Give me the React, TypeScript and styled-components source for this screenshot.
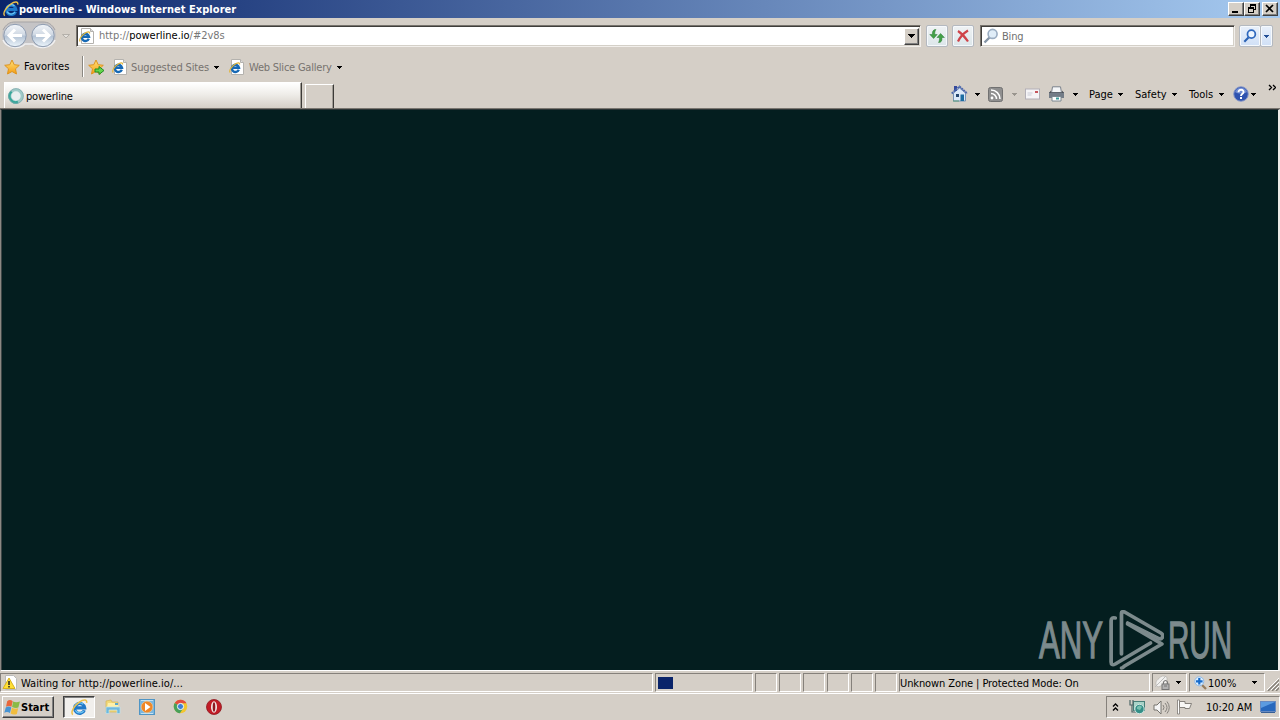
import React from 'react';
import styled, { createGlobalStyle } from 'styled-components';

const Global = createGlobalStyle`
  * { box-sizing: border-box; }
  body { margin: 0; overflow: hidden; }
`;

const face = '#d5cfc7';

const Desktop = styled.div`
  width: 1280px;
  height: 720px;
  display: flex;
  flex-direction: column;
  background: ${face};
  font-family: 'DejaVu Sans Condensed', 'DejaVu Sans', sans-serif;
  font-stretch: condensed;
  font-size: 11px;
  line-height: 14px;
  color: #000;
  overflow: hidden;
`;

const Text = styled.span<{ $left?: number; $space?: number; $color?: string; $bold?: boolean; $width?: number; $top?: number }>`
  flex: none;
  white-space: pre;
  width: ${p => (p.$width ? `${p.$width}px` : 'auto')};
  margin-left: ${p => p.$left ?? 0}px;
  margin-top: ${p => p.$top ?? 0}px;
  letter-spacing: ${p => p.$space ?? 0}px;
  color: ${p => p.$color ?? 'inherit'};
  font-weight: ${p => (p.$bold ? 700 : 400)};
`;

const Slot = styled.span<{ $left?: number; $top?: number }>`
  flex: none;
  display: flex;
  margin-left: ${p => p.$left ?? 0}px;
  margin-top: ${p => p.$top ?? 0}px;
`;

const TitleBar = styled.header`
  height: 18px;
  flex: none;
  display: flex;
  align-items: center;
  padding: 0 2px 0 3px;
  color: #fff;
  background: linear-gradient(90deg, #0a246a, #a6caf0);
`;

const Spacer = styled.div`
  flex: 1;
`;

const CaptionButton = styled.span<{ $left?: number }>`
  width: 16px;
  height: 14px;
  margin-left: ${p => p.$left ?? 0}px;
  background: ${face};
  border: 1px solid;
  border-color: #fff #404040 #404040 #fff;
  box-shadow: inset -1px -1px #808080;
  display: flex;
`;

const NavRow = styled.div`
  height: 34px;
  flex: none;
  display: flex;
  align-items: flex-start;
  padding: 2px 0 0 1px;
`;

const Field = styled.div<{ $width: number; $left: number }>`
  width: ${p => p.$width}px;
  height: 22px;
  flex: none;
  margin: 5px 0 0 ${p => p.$left}px;
  display: flex;
  align-items: center;
  background: #fff;
  border: 1px solid;
  border-color: #77736d #f2efeb #f2efeb #77736d;
  box-shadow: inset 1px 1px #403e3b, inset -1px -1px #d4d0c8;
`;

const DropButton = styled.span`
  width: 15px;
  height: 17px;
  display: flex;
  align-items: center;
  justify-content: center;
  background: ${face};
  border: 1px solid;
  border-color: #fff #404040 #404040 #fff;
  box-shadow: inset -1px -1px #808080;
`;

const GlassButton = styled.span<{ $left: number; $width: number; $blue?: boolean }>`
  width: ${p => p.$width}px;
  height: 22px;
  flex: none;
  margin: 5px 0 0 ${p => p.$left}px;
  display: flex;
  align-items: center;
  justify-content: center;
  border: 1px solid #b4b9c0;
  border-radius: 2px;
  box-shadow: inset 0 0 0 1px #f6f9fc;
  background: ${p => (p.$blue ? 'linear-gradient(#e9f0fa, #d0e0f6)' : 'linear-gradient(#eff2f4, #dce6ea)')};
`;

const FavoritesRow = styled.div`
  height: 30px;
  flex: none;
  display: flex;
  align-items: center;
  padding-left: 4px;
`;

const Divider = styled.span`
  width: 2px;
  height: 21px;
  margin: 0 0 2px 12px;
  border-left: 1px solid #8a8781;
  border-right: 1px solid #fff;
`;

const TabRow = styled.div`
  height: 27px;
  flex: none;
  display: flex;
  align-items: flex-start;
  border-bottom: 1px solid #79756f;
`;

const Tab = styled.div`
  width: 298px;
  height: 26px;
  margin-left: 4px;
  padding-left: 3px;
  display: flex;
  align-items: center;
  background: linear-gradient(#fff, #efede9 45%, ${face});
  border-top: 1px solid #fff;
  border-left: 1px solid #fff;
  border-right: 1px solid #3c3a37;
  box-shadow: inset -1px 0 #a09c95;
`;

const NewTab = styled.div`
  width: 29px;
  height: 24px;
  margin: 2px 0 0 3px;
  border-top: 1px solid #fff;
  border-left: 1px solid #fff;
  border-right: 1px solid #3c3a37;
  box-shadow: inset -1px 0 #a09c95;
`;

const Page = styled.main`
  height: 562px;
  flex: none;
  display: flex;
  justify-content: flex-end;
  align-items: flex-end;
  padding-right: 45px;
  background: #041e1f;
  border: solid;
  border-width: 1px 2px 1px 1px;
  border-color: #2b3435 #eeebe7 #fff #8c8983;
  box-shadow: inset 1px 0 #3e4646;
`;

const Watermark = styled.div`
  display: flex;
  align-items: flex-end;
  color: #7c8a8c;
  height: 60px;
  width: 194px;
`;

const Word = styled.span<{ $width: number; $scale: number; $left?: number }>`
  display: block;
  flex: none;
  width: ${p => p.$width}px;
  height: 50px;
  margin-left: ${p => p.$left ?? 0}px;
  margin-bottom: 4px;
  font: 400 51px/50px 'Liberation Sans', sans-serif;
  -webkit-text-stroke: 1.3px #7c8a8c;
  white-space: nowrap;
  transform: scaleX(${p => p.$scale});
  transform-origin: 0 0;
`;

const StatusBar = styled.div`
  height: 22px;
  flex: none;
  display: flex;
  padding-top: 2px;
`;

const Pane = styled.div<{ $width: number; $left?: number; $pad?: number }>`
  width: ${p => p.$width}px;
  height: 19px;
  flex: none;
  margin-left: ${p => p.$left ?? 0}px;
  padding-left: ${p => p.$pad ?? 0}px;
  display: flex;
  align-items: center;
  border: 1px solid;
  border-color: #85817b #fff #fff #85817b;
`;

const Progress = styled.span`
  width: 15px;
  height: 12px;
  background: #0a246a;
`;

const TaskBar = styled.footer`
  height: 27px;
  flex: none;
  display: flex;
  align-items: flex-start;
  border-top: 1px solid #fff;
  padding: 2px 0 0 2px;
`;

const StartButton = styled.div`
  width: 52px;
  height: 22px;
  display: flex;
  align-items: center;
  border: 1px solid;
  border-color: #fff #404040 #404040 #fff;
  box-shadow: inset -1px -1px #808080;
`;

const TaskButton = styled.div`
  width: 32px;
  height: 22px;
  margin-left: 9px;
  display: flex;
  align-items: center;
  justify-content: center;
  background: #f1efec;
  border: 1px solid;
  border-color: #404040 #fff #fff #404040;
  box-shadow: inset 1px 1px #808080;
`;

const Tray = styled.div`
  width: 174px;
  height: 22px;
  display: flex;
  align-items: center;
  border: 1px solid;
  border-color: #85817b #fff #fff #85817b;
`;

const Arrow = ({ color = '#000', small = false }: { color?: string; small?: boolean }) => (
  <svg width={small ? 5 : 7} height={small ? 3 : 4} viewBox="0 0 7 4" shapeRendering="crispEdges">
    <path d="M0 0h7L3.5 4z" fill={color} />
  </svg>
);

const IELogo = ({ size = 16 }: { size?: number }) => (
  <svg width={size} height={size} viewBox="0 0 16 16">
    <path d="M12.6 10.6A4.7 4.7 0 1 1 12.9 8.4H5" fill="none" stroke="#1f78c8" strokeWidth="3" />
    <path d="M12 11.2A4.8 4.8 0 0 1 4 10.600M3.800 6.800a4.800 4.800 0 0 1 7.700-1.900" fill="none" stroke="#6cc4f2" strokeWidth="1.300" />
    <path d="M1.700 14.700C-.7 12.400 3 6.400 7.500 3.200S15.400.4 14.700 3.600" fill="none" stroke="#ecc04a" strokeWidth="1.400" />
  </svg>
);

const PageIcon = () => (
  <svg width="16" height="16" viewBox="0 0 16 16">
    <path d="M2.500.5h9l3 3v12h-12z" fill="#fff" stroke="#b4b2ae" />
    <path d="M11.500.5v3h3" fill="#ddd" stroke="#b4b2ae" />
    <path d="M9.800 10.700A3.600 3.600 0 1 1 10 8.700H4" fill="none" stroke="#1769b5" strokeWidth="2.400" />
    <path d="M1 13.500c-1-2 1-5.500 4.500-8s5.600-1.800 5 0" fill="none" stroke="#e2b53a" strokeWidth="1.200" />
  </svg>
);

const NavArrows = () => (
  <svg width="56" height="30" viewBox="0 0 56 30">
    <defs>
      <linearGradient id="orb" x2="0" y2="1">
        <stop stopColor="#f2f5f9" />
        <stop offset=".48" stopColor="#cfd8e3" />
        <stop offset=".52" stopColor="#b3c2d4" />
        <stop offset="1" stopColor="#edf6fc" />
      </linearGradient>
    </defs>
    <path d="M14 2h28a13 13 0 0 1 0 26c-5 0-8-3-14-3s-9 3-14 3a13 13 0 0 1 0-26z" fill="#c5c4c6" />
    <path d="M2 10C5 4 9 2 14 2h28c5 0 9 2 12 8" fill="none" stroke="#a5a3a5" />
    <path d="M2 20c3 8 16 10 22 4h8c6 6 19 4 22-4" fill="none" stroke="#f1f1f2" strokeWidth="1.500" />
    {[14, 42].map(x => (
      <circle key={x} cx={x} cy="15.500" r="11.200" fill="url(#orb)" stroke="#8d9bb0" />
    ))}
    <g fill="none" stroke="#fff" strokeWidth="3">
      <path d="M21 15.500H9M14 9.500l-6 6 6 6" />
      <path d="M35 15.500h12M42 9.500l6 6-6 6" />
    </g>
  </svg>
);

const Star = ({ add = false }: { add?: boolean }) => (
  <svg width="17" height="17" viewBox="0 0 17 17">
    <defs>
      <linearGradient id="gold" x2="0" y2="1">
        <stop stopColor="#ffe27a" />
        <stop offset="1" stopColor="#f59c10" />
      </linearGradient>
    </defs>
    <path d="M8 1l2.200 4.700 5.100.6-3.800 3.500 1 5.200L8 12.500 3.500 15l1-5.200L.7 6.300l5.100-.6z" fill="url(#gold)" stroke="#dd9420" />
    {add && <path d="M7 10h4V7.500l5 4-5 4V13H7z" fill="#64d64b" stroke="#238b24" />}
  </svg>
);

const Refresh = () => (
  <svg width="16" height="16" viewBox="0 0 16 16">
    <path d="M7 1.500C4 1.500 3.200 3.500 3.400 6.500H.8l3.800 4 3.600-4H5.900C5.600 4.500 5.800 3.300 7 1.500z" fill="#43a047" stroke="#2b7d38" strokeWidth=".5" />
    <path d="M9.500 14.500c3 0 3.700-2 3.400-5h2.500l-3.800-4-3.600 4h2.300c.4 2 .2 3.200-.8 5z" fill="#43a047" stroke="#2b7d38" strokeWidth=".5" />
  </svg>
);

const Stop = () => (
  <svg width="14" height="14" viewBox="0 0 14 14">
    <path d="M2 2C5 4 9 8 12 12.500M12 1.500C8 4 4 8 2 12.500" fill="none" stroke="#cf4349" strokeWidth="2.200" />
  </svg>
);

const Glass = ({ pale = false, size = 16 }: { pale?: boolean; size?: number }) => (
  <svg width={size} height={size} viewBox="0 0 16 16">
    <path d="M1.500 14.500L6.500 9.500" stroke={pale ? '#8494a6' : '#2a62b4'} strokeWidth="2.400" />
    <circle cx="9.600" cy="5.900" r="4.500" fill={pale ? '#e0edf8' : '#edf5ff'} stroke={pale ? '#9badc2' : '#2f68bd'} strokeWidth={pale ? 1.6 : 2} />
  </svg>
);

const Spinner = () => (
  <svg width="16" height="16" viewBox="0 0 16 16">
    <circle cx="8" cy="8" r="6.200" fill="#e8eff0" stroke="#9fcac8" strokeWidth="3" />
    <path d="M3.500 3.500A6.300 6.300 0 0 0 10 14" fill="none" stroke="#35a79b" strokeWidth="2.400" />
    <circle cx="8" cy="8" r="7.400" fill="none" stroke="#7fa6aa" strokeWidth=".7" />
  </svg>
);

const Home = () => (
  <svg width="17" height="17" viewBox="0 0 17 17">
    <path d="M2.500 8v8h12V8L8.500 3z" fill="#dce8f8" stroke="#7992b5" />
    <path d="M3 1h3v5H3z" fill="#354a9d" />
    <path d="M.7 8.500L8.500 1.500l7.800 7" fill="none" stroke="#4b66ad" strokeWidth="1.800" strokeDasharray="2 .6" />
    <path d="M5 9h3v3H5z" fill="#26456f" />
    <path d="M9.500 9.500h3.500V16H9.500z" fill="#1c6ca1" />
    <path d="M2 16h6" stroke="#5a9b7b" />
  </svg>
);

const Feed = () => (
  <svg width="15" height="15" viewBox="0 0 15 15">
    <rect x=".5" y=".5" width="14" height="14" rx="2" fill="#8f8f8f" stroke="#717171" />
    <circle cx="4" cy="11" r="1.400" fill="#fff" />
    <path d="M3 6.500a5.500 5.500 0 0 1 5.500 5.500M3 3a9 9 0 0 1 9 9" fill="none" stroke="#fff" strokeWidth="1.500" />
  </svg>
);

const Mail = () => (
  <svg width="15" height="12" viewBox="0 0 15 12">
    <rect x=".5" y="1" width="14" height="10" fill="#f5f4f6" stroke="#b3b0b7" />
    <path d="M2.500 5h5M2.500 7h4" stroke="#c9cbd5" />
    <path d="M10 3h3v2h-3z" fill="#c6545b" />
  </svg>
);

const Printer = () => (
  <svg width="17" height="16" viewBox="0 0 17 16">
    <path d="M4.500.8h8l1 6h-10z" fill="#f4f6f8" stroke="#7a818b" />
    <path d="M1 6h15v6H1z" fill="#737c87" />
    <path d="M3 4.500L1 7h15l-2-2.500v2H3z" fill="#4c5158" />
    <path d="M4 10.500h9v4.500H4z" fill="#fff" stroke="#7b8790" />
    <path d="M8 12.500h3" stroke="#3a9a9a" strokeWidth="2" />
  </svg>
);

const Help = () => (
  <svg width="16" height="16" viewBox="0 0 16 16">
    <circle cx="8" cy="8" r="7.300" fill="#2e52af" stroke="#8b9ac8" />
    <path d="M2 6a6.400 6.400 0 0 1 12 0c-3 2-9 2-12 0z" fill="#6e8bd2" />
    <path d="M5.500 6.200C5.500 2.700 11 3 10.500 6.200 10.200 7.700 8 7.800 8 10" fill="none" stroke="#fff" strokeWidth="1.900" />
    <path d="M7 11h2v2H7z" fill="#fff" />
  </svg>
);

const Warning = () => (
  <svg width="16" height="16" viewBox="0 0 16 16">
    <path d="M3.500.5h8l3 3v11h-11z" fill="#fff" stroke="#bbb" />
    <path d="M7 3L13 13.500H1z" fill="#ffdf35" stroke="#d8b21f" strokeLinejoin="round" />
    <path d="M7 6v4M7 11v1.500" stroke="#222" strokeWidth="1.500" />
  </svg>
);

const PrivacyLock = () => (
  <svg width="16" height="16" viewBox="0 0 16 16">
    <path d="M4 3.500a5 5 0 0 1 8-1v6L3 12C0 10 0 6 4 3.500z" fill="#f1f0ee" stroke="#b5b2ad" strokeWidth=".7" />
    <path d="M0 12L11 1" stroke="#bbb" />
    <rect x="7" y="9" width="7" height="5.500" fill="#b2b2b2" stroke="#777" />
    <path d="M8.500 9V7q2-3 4 0v2M9 11h3" fill="none" stroke="#777" strokeWidth="1.200" />
  </svg>
);

const ZoomIn = () => (
  <svg width="13" height="14" viewBox="0 0 13 14">
    <path d="M8 9l4 4" stroke="#967c5e" strokeWidth="2.300" />
    <circle cx="5.300" cy="5.300" r="4.500" fill="#dcefff" stroke="#8fb8e6" strokeWidth="1" />
    <path d="M2 5.300h6.600M5.300 2v6.600" stroke="#176bcb" strokeWidth="2.200" />
  </svg>
);

const Grip = () => (
  <svg width="12" height="13" viewBox="0 0 12 13">
    <path d="M1 13L13 1M5 13l8-8M9 13l4-4" stroke="#858078" strokeWidth="1.500" />
    <path d="M0 12L12 0M4 12l8-8M8 12l4-4" stroke="#fff" />
  </svg>
);

const WindowsFlag = () => (
  <svg width="17" height="17" viewBox="0 0 16 16">
    <path d="M3 2q2.500-2 5.200 0L7 7.300Q4.500 5.800 1.900 7.300z" fill="#e9673b" />
    <path d="M8.600 2.300q2.700 1.500 6.400 0L13.500 8Q11 9 7.600 7.500z" fill="#8aba45" />
    <path d="M1.700 7.900q2.500-1.500 5.200 0l-1.300 5.300Q3 11.500.3 13z" fill="#4794d3" />
    <path d="M7.500 8.200q2.900 1.500 5.800.6l-1.200 5.200Q9 15.500 6.200 13.600z" fill="#f1bd3e" />
  </svg>
);

const Explorer = () => (
  <svg width="16" height="16" viewBox="0 0 16 16">
    <path d="M1 2l5-1 1 2h6v10H1z" fill="#f1d878" stroke="#d4b458" strokeWidth=".7" />
    <path d="M3 4h10l1 5H2z" fill="#fff0a8" />
    <path d="M1 8h14v6.500h-3V11H4v3.500H1z" fill="#6eb8dc" stroke="#bee2ef" strokeWidth=".7" />
    <path d="M10 4h3v2h-3z" fill="#57a8d0" />
  </svg>
);

const MediaPlayer = () => (
  <svg width="16" height="16" viewBox="0 0 16 16">
    <rect x=".5" y=".5" width="15" height="15" fill="#7cb7df" stroke="#4f95c5" />
    <path d="M2 1.500h12M2 14.500h12" stroke="#c2e2f3" />
    <circle cx="8" cy="8" r="5.800" fill="#ef8727" stroke="#f8c98f" strokeWidth=".6" />
    <path d="M6 4L11.500 8 6 12z" fill="#fff" />
  </svg>
);

const Chrome = () => (
  <svg width="15" height="15" viewBox="0 0 16 16">
    <circle cx="8" cy="8" r="7.200" fill="#f3c62e" />
    <path d="M8 8L1.800 4.300a7.200 7.200 0 0 1 12.600.3H8z" fill="#e34c3e" />
    <path d="M8 8L1.800 4.300A7.200 7.200 0 0 0 7.400 15.200L11 9.700z" fill="#48a05a" />
    <circle cx="8" cy="8" r="3.300" fill="#3f80d4" stroke="#fff" />
  </svg>
);

const Opera = () => (
  <svg width="16" height="16" viewBox="0 0 16 16">
    <circle cx="8" cy="8" r="7.500" fill="#c21c26" stroke="#8e1820" strokeWidth=".8" />
    <ellipse cx="8" cy="8" rx="3" ry="5.700" fill="#f3e9e8" />
    <ellipse cx="8" cy="8" rx="1.300" ry="4.700" fill="#8e1820" />
  </svg>
);

const NetworkIcon = () => (
  <svg width="17" height="16" viewBox="0 0 17 16">
    <rect x="4.500" y="2.500" width="11" height="9" fill="#a9d3c8" stroke="#477e78" />
    <path d="M1 1v5h2v7h6M4 1v5H2" fill="none" stroke="#4f6768" strokeWidth="1.200" />
    <circle cx="10.500" cy="10" r="4.700" fill="#348f87" stroke="#d1e5e1" />
    <path d="M8 8q3-3 5 0l-2 3-3-1z" fill="#79c0b1" />
  </svg>
);

const Speaker = () => (
  <svg width="17" height="15" viewBox="0 0 17 15">
    <path d="M1 5h3l4-4v13L4 10H1z" fill="#f5f5f5" stroke="#77746f" />
    <path d="M10 5q2 2.500 0 5M12 3q4 4.500 0 9M14 1.500q4.500 6 0 12" fill="none" stroke="#85827d" />
  </svg>
);

const Flag = () => (
  <svg width="17" height="16" viewBox="0 0 17 16">
    <path d="M1.500 1v14h2V1z" fill="#fff" stroke="#7b7772" strokeWidth=".8" />
    <path d="M3.500 2.500H9v2h6.500l-2 5H9v-1H3.500z" fill="#f8f7f5" stroke="#7b7772" strokeWidth=".9" />
  </svg>
);

const Monitor = () => (
  <svg width="16" height="15" viewBox="0 0 16 15">
    <rect x=".5" y="1.500" width="15" height="10" fill="#2868bd" stroke="#688ac0" />
    <path d="M1 2h14L1 8z" fill="#5c9be0" />
    <path d="M1 12.500h14" stroke="#375f96" />
  </svg>
);

const Chevrons = ({ up = false }: { up?: boolean }) => (
  <svg width="8" height="8" viewBox="0 0 8 8">
    <path d={up ? 'M1 3.500L3.500 1 6 3.500M1 7.500L3.500 5 6 7.500' : 'M1 1l2.500 2.500L1 6M5 1l2.500 2.500L5 6'} fill="none" stroke="#000" strokeWidth="1.300" />
  </svg>
);

const PlayMark = () => (
  <svg width="56" height="60" viewBox="-1 0 54 60" preserveAspectRatio="none" fill="none" stroke="#7c8a8c" strokeWidth="3.600" strokeLinecap="round" strokeLinejoin="round">
    <path d="M12 44V3q0-2 3-1L50 23q3 2 1 5-1 2-4 0L18 13" />
    <path d="M6 8q-4-1-4 3v41q0 4 4 2L40 33" />
    <path d="M18 14L51 34 15 56q-2 2-3 2" />
  </svg>
);

export default function App() {
  return (
    <Desktop>
      <Global />
      <TitleBar>
        <IELogo />
        <Text $bold $top={1} $space={0.04}>powerline - Windows Internet Explorer</Text>
        <Spacer />
        <CaptionButton><svg width="14" height="12" shapeRendering="crispEdges"><path d="M3 8h6v2H3z" /></svg></CaptionButton>
        <CaptionButton><svg width="14" height="12" shapeRendering="crispEdges"><path d="M5 1h6v2H5zM5 3h1v1H5zM10 3h1v4h-2V6h1zM3 4h6v2H3zM3 6h1v4H3zM8 6h1v4H8zM3 9h6v1H3z" /></svg></CaptionButton>
        <CaptionButton $left={2}><svg width="14" height="12"><path d="M3 2l7 7M10 2L3 9" stroke="#000" strokeWidth="1.700" /></svg></CaptionButton>
      </TitleBar>
      <NavRow>
        <NavArrows />
        <Slot $left={5} $top={14}><svg width="8" height="5"><path d="M.5.5h7L4 4z" fill="#e5e2dd" stroke="#aaa69f" strokeWidth=".8" /></svg></Slot>
        <Field $left={6} $width={845}>
          <Slot $left={2}><PageIcon /></Slot>
          <Text $left={4} $color="#777" $space={-0.02}><span>http://</span><Text $color="#000">powerline.io</Text>/#2v8s</Text>
          <Spacer />
          <DropButton><Arrow /></DropButton>
          <Slot $left={1} />
        </Field>
        <GlassButton $left={5} $width={22}><Refresh /></GlassButton>
        <GlassButton $left={4} $width={22}><Stop /></GlassButton>
        <Field $left={6} $width={255}>
          <Slot $left={2}><Glass pale /></Slot>
          <Text $left={3} $top={1} $color="#707070" $space={-0.2}>Bing</Text>
        </Field>
        <GlassButton $left={4} $width={22} $blue><Glass size={14} /></GlassButton>
        <GlassButton $left={-1} $width={13} $blue><Arrow small color="#244f96" /></GlassButton>
      </NavRow>
      <FavoritesRow>
        <Star />
        <Text $left={3} $width={46} $space={0.1}>Favorites</Text>
        <Divider />
        <Slot $left={4}><Star add /></Slot>
        <Slot $left={7}><PageIcon /></Slot>
        <Text $left={3} $top={1} $width={83} $color="#77736f" $space={-0.12}>Suggested Sites</Text>
        <Arrow small />
        <Slot $left={10}><PageIcon /></Slot>
        <Text $left={4} $top={1} $width={88} $color="#77736f" $space={-0.22}>Web Slice Gallery</Text>
        <Arrow small />
      </FavoritesRow>
      <TabRow>
        <Tab>
          <Spinner />
          <Text $left={2} $top={2} $space={-0.2}>powerline</Text>
        </Tab>
        <NewTab />
        <Slot $left={617} $top={3}><Home /></Slot>
        <Slot $left={7} $top={11}><Arrow small /></Slot>
        <Slot $left={8} $top={5}><Feed /></Slot>
        <Slot $left={9} $top={11}><Arrow small color="#99958e" /></Slot>
        <Slot $left={8} $top={6}><Mail /></Slot>
        <Slot $left={8} $top={4}><Printer /></Slot>
        <Slot $left={8} $top={11}><Arrow small /></Slot>
        <Text $left={11} $top={6} $width={29}>Page</Text>
        <Slot $top={11}><Arrow small /></Slot>
        <Text $left={12} $top={6} $width={37}>Safety</Text>
        <Slot $top={11}><Arrow small /></Slot>
        <Text $left={12} $top={6} $width={30}>Tools</Text>
        <Slot $top={11}><Arrow small /></Slot>
        <Slot $left={9} $top={4}><Help /></Slot>
        <Slot $left={2} $top={11}><Arrow small /></Slot>
        <Slot $left={12} $top={2}><Chevrons /></Slot>
      </TabRow>
      <Page>
        <Watermark>
          <Word $width={69} $scale={0.61}>ANY</Word>
          <PlayMark />
          <Word $width={64} $scale={0.58} $left={4}>RUN</Word>
        </Watermark>
      </Page>
      <StatusBar>
        <Pane $width={653} $pad={1}>
          <Warning />
          <Text $left={3} $top={3} $space={0.04}>Waiting for http://powerline.io/...</Text>
        </Pane>
        <Pane $left={2} $width={98} $pad={2}><Progress /></Pane>
        <Pane $left={2} $width={22} />
        <Pane $left={2} $width={22} />
        <Pane $left={2} $width={22} />
        <Pane $left={2} $width={22} />
        <Pane $left={2} $width={22} />
        <Pane $left={2} $width={22} />
        <Pane $left={2} $width={251}><Text $top={3} $space={-0.1}>Unknown Zone | Protected Mode: On</Text></Pane>
        <Pane $left={2} $width={35} $pad={2}><PrivacyLock /><Slot $left={5}><Arrow small /></Slot></Pane>
        <Pane $left={2} $width={76} $pad={4}>
          <ZoomIn />
          <Text $left={1} $top={3} $width={44}>100%</Text>
          <Arrow small />
        </Pane>
        <Slot $left={2} $top={5}><Grip /></Slot>
      </StatusBar>
      <TaskBar>
        <StartButton><Slot $left={1}><WindowsFlag /></Slot><Text $bold $top={1}>Start</Text></StartButton>
        <TaskButton><IELogo size={17} /></TaskButton>
        <Slot $left={10} $top={3}><Explorer /></Slot>
        <Slot $left={18} $top={3}><MediaPlayer /></Slot>
        <Slot $left={18} $top={3}><Chrome /></Slot>
        <Slot $left={18} $top={3}><Opera /></Slot>
        <Spacer />
        <Tray>
          <Slot $left={5}><Chevrons up /></Slot>
          <Slot $left={9}><NetworkIcon /></Slot>
          <Slot $left={7}><Speaker /></Slot>
          <Slot $left={6}><Flag /></Slot>
          <Text $left={13} $top={1} $width={46} $space={-0.1}>10:20 AM</Text>
          <Slot $left={8}><Monitor /></Slot>
        </Tray>
      </TaskBar>
    </Desktop>
  );
}
